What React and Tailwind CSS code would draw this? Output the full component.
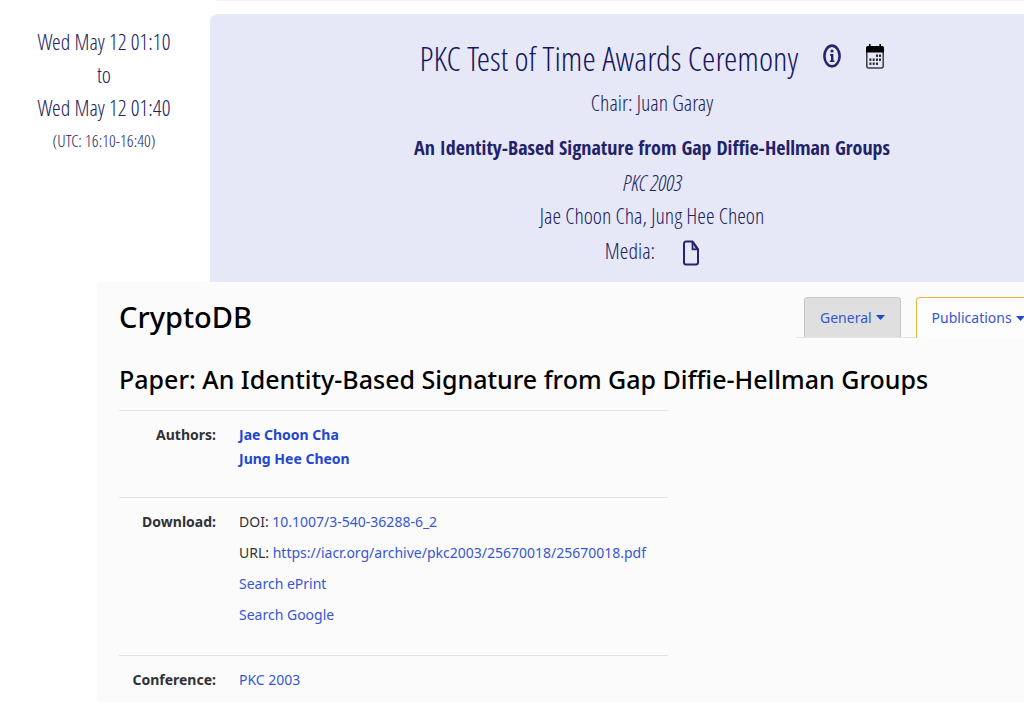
import React from 'react';

const API = 'https://iacr.org';

const links = [
  { prefix: 'DOI: ', label: '10.1007/3-540-36288-6_2', href: 'https://doi.org/10.1007/3-540-36288-6_2' },
  { prefix: 'URL: ', label: 'https://iacr.org/archive/pkc2003/25670018/25670018.pdf', href: `${API}/archive/pkc2003/25670018/25670018.pdf` },
  { prefix: '', label: 'Search ePrint', href: 'https://eprint.iacr.org/search' },
  { prefix: '', label: 'Search Google', href: 'https://www.google.com/search' },
];

const InfoIcon = () => (
  <svg className="w-[18px] h-6" viewBox="0 0 18 24" fill="none">
    <ellipse cx="9" cy="12" rx="7.6" ry="10.4" stroke="#25256f" strokeWidth="2.6" />
    <ellipse cx="9" cy="7" rx="1.6" ry="1.6" fill="#25256f" />
    <path d="M7 10h3.4v6.4h1v1.7H6.8v-1.7H8v-4.7H7z" fill="#25256f" />
  </svg>
);

const CalendarIcon = () => (
  <svg className="w-[18px] h-[25px]" viewBox="0 0 18 25">
    <rect x="0.8" y="3" width="16.4" height="21" rx="2" fill="#e6e8f7" stroke="#3c3c44" strokeWidth="1.5" />
    <path d="M0 8.5V4a2 2 0 0 1 2-2h1V0h1.6v2h8.8V0H15v2h1a2 2 0 0 1 2 2v4.5z" fill="#000" />
    <g fill="#26262e">
      <rect x="10" y="10.5" width="2" height="2.4" /><rect x="13" y="10.5" width="2" height="2.4" />
      <rect x="3.4" y="14.5" width="2" height="2.4" /><rect x="6.7" y="14.5" width="2" height="2.4" /><rect x="10" y="14.5" width="2" height="2.4" /><rect x="13" y="14.5" width="2" height="2.4" />
      <rect x="3.4" y="18.5" width="2" height="2.4" /><rect x="6.7" y="18.5" width="2" height="2.4" /><rect x="10" y="18.5" width="2" height="2.4" />
    </g>
  </svg>
);

const FileIcon = () => (
  <svg className="w-4 h-[26px]" viewBox="0 0 16 26" fill="none" stroke="#25256f" strokeWidth="2" strokeLinejoin="round">
    <path d="M3 1.5h6.6L15 9v13.5a2 2 0 0 1-2 2H3a2 2 0 0 1-2-2v-19a2 2 0 0 1 2-2z" />
    <path d="M9.4 2v7.4H15z" fill="#25256f" fillOpacity="0.35" strokeWidth="1.6" />
  </svg>
);

const Caret = () => (
  <svg className="w-[9px] h-[5px] shrink-0" viewBox="0 0 9 5">
    <path d="M0 0h9L4.5 5z" fill="#1f47d0" />
  </svg>
);

const Session = () => (
  <section className="flex font-['Open_Sans_Condensed_Light','Open_Sans',sans-serif] text-[22px] leading-[33px] text-[#22225e] text-center">
    <div className="w-[208px] shrink-0 mr-0.5 pt-[25px]">
      <p>Wed May 12 01:10</p>
      <p>to</p>
      <p>Wed May 12 01:40</p>
      <p className="text-[17px]">(UTC: 16:10-16:40)</p>
    </div>
    <div className="flex-1 min-w-0">
      <div className="ml-1.5 h-px mb-[13px] bg-[#f1f1fc]" />
      <div className="h-[268px] rounded-tl-lg bg-[#e6e8f7] pl-[70px] pt-6">
        <div className="flex justify-center items-center">
          <h2 className="text-[34px] leading-[40px] text-[#16165e]">PKC Test of Time Awards Ceremony</h2>
          <button type="button" aria-label="Information" className="ml-[25px] mb-1"><InfoIcon /></button>
          <button type="button" aria-label="Add to calendar" className="ml-[25px] mb-1"><CalendarIcon /></button>
        </div>
        <p className="mt-2">Chair: Juan Garay</p>
        <p className="mt-3 font-['Open_Sans_Condensed','Open_Sans',sans-serif] text-[20px] font-bold text-[#22226a]">An Identity-Based Signature from Gap Diffie-Hellman Groups</p>
        <p className="mt-0.5 italic">PKC 2003</p>
        <p>Jae Choon Cha, Jung Hee Cheon</p>
        <p className="mt-0.5 flex justify-center items-center">
          Media: <a href="#paper" aria-label="Paper" className="ml-7 mt-1"><FileIcon /></a>
        </p>
      </div>
    </div>
  </section>
);

const Row = ({ label, children }) => (
  <tr className="border-t border-[#e2e3e6] align-top">
    <th scope="row" className="w-[97px] pt-3 text-right font-bold">{label}</th>
    <td className="pl-[23px] pt-3">{children}</td>
  </tr>
);

const CryptoDB = () => (
  <main id="paper" className="ml-[97px] pl-[22px] pb-2.5 bg-[#fbfbfb] font-['Noto_Sans','Open_Sans',sans-serif] text-[14px] leading-6 text-[#303236]">
    <header className="flex justify-between items-start pt-[15px]">
      <h1 className="text-[29px] leading-[39px] font-medium text-black">CryptoDB</h1>
      <nav className="flex w-[228px] overflow-hidden text-[#3557d6]">
        <div className="pl-2 pr-[15px] border-b border-[#e2e3e6]">
          <button type="button" className="flex items-center gap-1 h-10 px-[15px] rounded-t border border-b-0 border-[#c6c6c6] bg-[#dfdfdf]">General <Caret /></button>
        </div>
        <button type="button" className="flex items-center gap-1 h-[41px] px-[15px] shrink-0 rounded-t border border-b-0 border-[#f0b23e] bg-[#fdfdfd]">Publications <Caret /></button>
      </nav>
    </header>

    <h2 className="mt-[23px] text-[25px] leading-9 font-medium text-black">Paper: An Identity-Based Signature from Gap Diffie-Hellman Groups</h2>

    <table className="mt-[13px] w-full max-w-[549px] table-fixed border-collapse">
      <tbody>
        <Row label="Authors:">
          <div className="pb-[26px] font-bold text-[#1f47d0]">
            <a href="#cha" className="block">Jae Choon Cha</a>
            <a href="#cheon" className="block">Jung Hee Cheon</a>
          </div>
        </Row>
        <Row label="Download:">
          <ul className="pb-[21px]">
            {links.map((l) => (
              <li key={l.label} className="pb-[7px] whitespace-nowrap">
                {l.prefix}<a href={l.href} className="text-[#3557d6]">{l.label}</a>
              </li>
            ))}
          </ul>
        </Row>
        <Row label="Conference:">
          <a href="#pkc2003" className="text-[#3557d6]">PKC 2003</a>
        </Row>
      </tbody>
    </table>
  </main>
);

const App = () => (
  <div className="min-h-screen overflow-hidden bg-white">
    <Session />
    <CryptoDB />
  </div>
);

export default App;
